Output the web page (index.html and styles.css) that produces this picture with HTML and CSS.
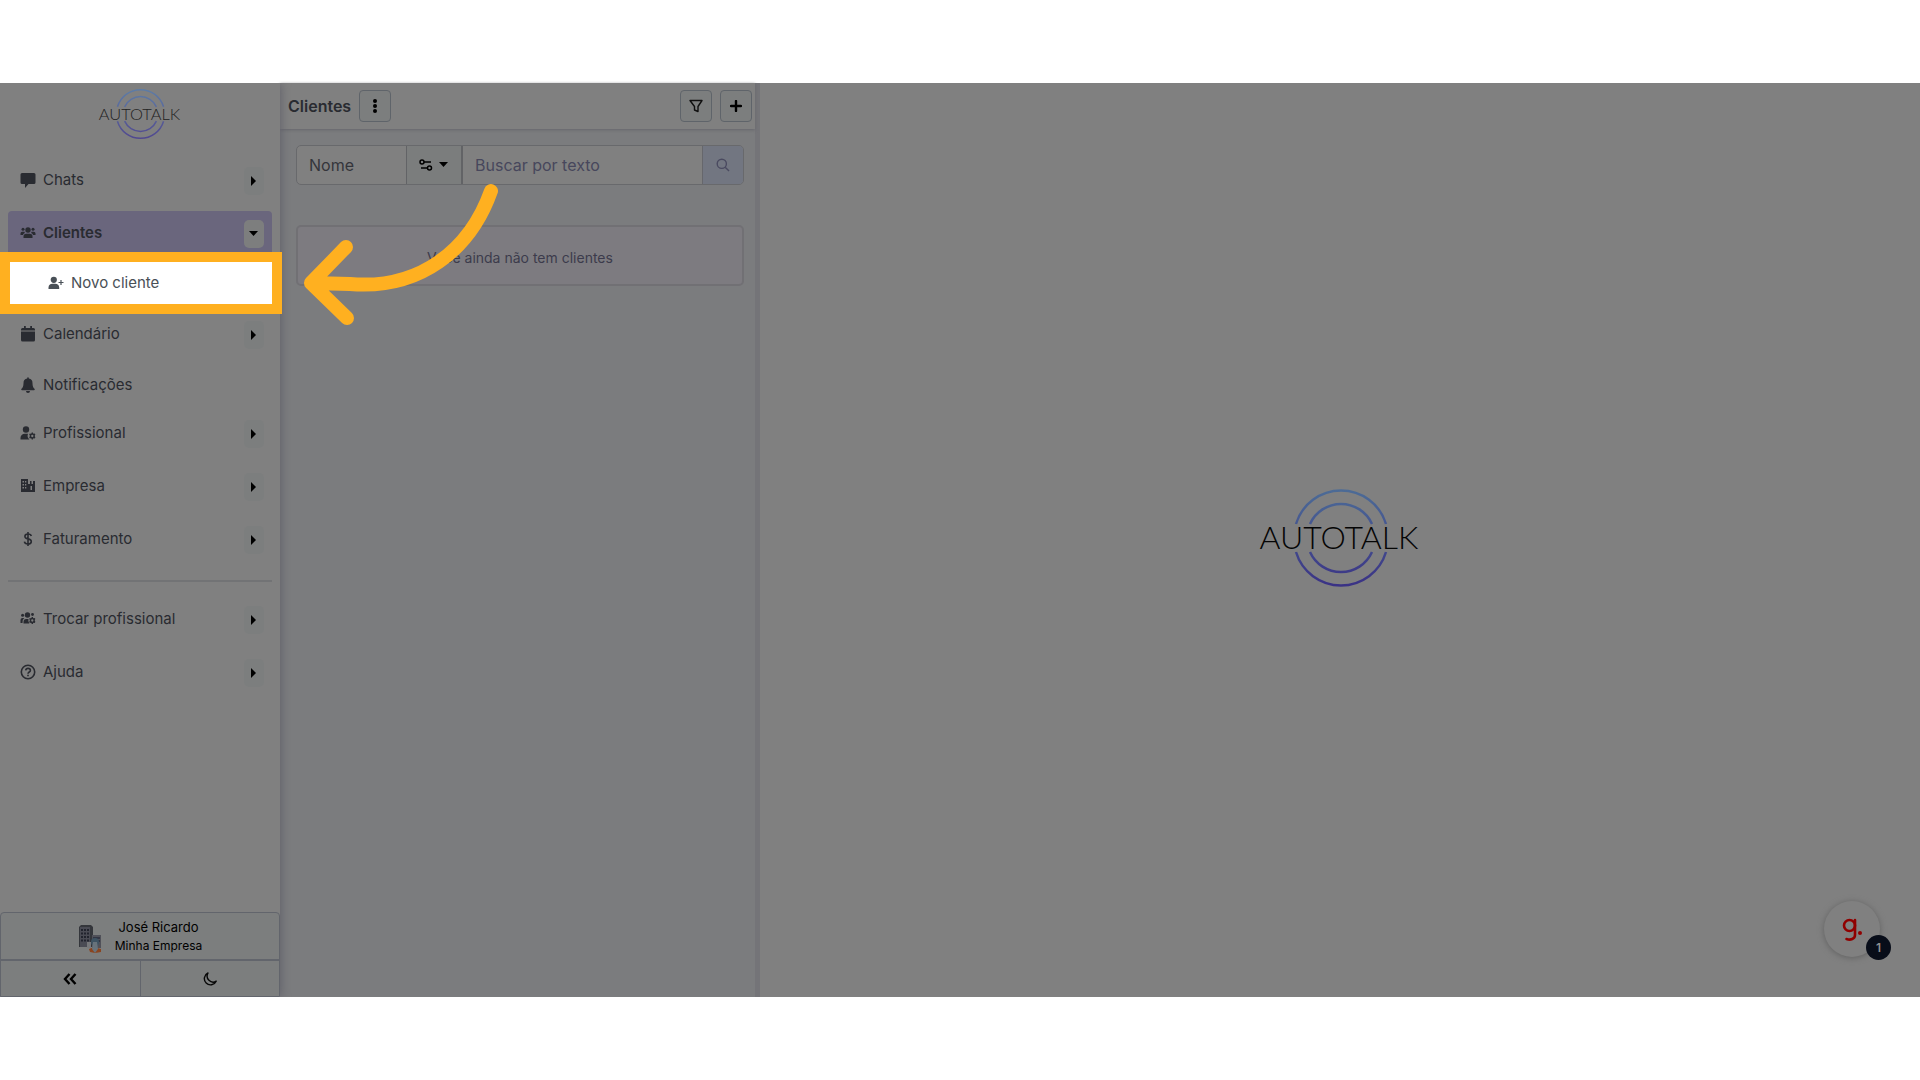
FILE: index.html
```html
<!DOCTYPE html>
<html lang="pt-BR">
<head>
<meta charset="utf-8">
<meta name="viewport" content="width=device-width, initial-scale=1">
<title>Autotalk - Clientes</title>
<link rel="stylesheet" href="styles.css">
</head>
<body>
<svg class="defs" aria-hidden="true">
  <defs>
    <linearGradient id="ring" gradientUnits="userSpaceOnUse" x1="0" y1="2" x2="0" y2="98">
      <stop offset="0" stop-color="#4c6b96"/><stop offset=".4" stop-color="#455590"/><stop offset="1" stop-color="#3a3285"/>
    </linearGradient>
    <linearGradient id="ring-soft" gradientUnits="userSpaceOnUse" x1="0" y1="2" x2="0" y2="98">
      <stop offset="0" stop-color="#5d7ca6"/><stop offset=".4" stop-color="#5a699c"/><stop offset="1" stop-color="#50478f"/>
    </linearGradient>
  </defs>
  <symbol id="caret-right" viewBox="0 0 6 10"><path d="M0 0l5 5-5 5z"/></symbol>
  <symbol id="caret-down" viewBox="0 0 10 6"><path d="M0 0h9L4.500 5z"/></symbol>
  <symbol id="gear" viewBox="0 0 8 8"><path fill-rule="evenodd" d="M3.300 0h1.400l.3 1 .8.4 1-.3.8 1.300-.7.8v1.500l.7.8-.8 1.300-1-.3-.8.4-.3 1H3.300l-.3-1-.8-.4-1 .3-.8-1.300.7-.8V3.200l-.7-.8.8-1.300 1 .3.8-.4zM4 2.700a1.300 1.300 0 100 2.600 1.300 1.300 0 000-2.600z"/></symbol>
</svg>

<div class="app">
  <nav class="sidebar" aria-label="Menu principal">
    <a class="brand" href="#">
      <svg class="logo logo-small" viewBox="0 0 164 100" role="img" aria-label="Autotalk">
        <g fill="none" stroke="url(#ring-soft)" stroke-width="3">
          <path d="M38 36a47 47 0 0 1 90 0M52 36a34 34 0 0 1 62 0M38 64a47 47 0 0 0 90 0M52 64a34 34 0 0 0 62 0"/>
        </g>
        <text class="logo-text" x="81" y="61" text-anchor="middle">AUTOTALK</text>
      </svg>
    </a>
    <ul class="menu">
      <li class="row">
        <a href="#"><svg class="icon" viewBox="0 0 16 16"><path d="M2 1h12A1.500 1.500 0 0 1 15.500 2.500v8a1.500 1.500 0 0 1-1.500 1.500H8.500L5 16v-4H2A1.500 1.500 0 0 1 .5 10.500v-8A1.500 1.500 0 0 1 2 1z"/></svg>Chats</a>
        <button class="toggle" aria-label="Abrir Chats"><svg class="car-r"><use href="#caret-right"/></svg></button>
      </li>
      <li class="row active">
        <a href="#"><svg class="icon" viewBox="0 0 16 16"><circle cx="8" cy="5" r="2.700"/><path d="M3.500 13v-1.500A2.800 2.800 0 0 1 6.300 8.700h3.400a2.800 2.800 0 0 1 2.800 2.800V13z"/><circle cx="3" cy="4.300" r="1.500"/><circle cx="13" cy="4.300" r="1.500"/><path d="M.5 10V8.500A1.700 1.700 0 0 1 2.200 6.800H4.500L4.800 8A3.800 3.800 0 0 0 2.900 10zM15.500 10V8.500a1.700 1.700 0 0 0-1.700-1.700H11.500L11.200 8a3.800 3.800 0 0 1 1.900 2z"/></svg>Clientes</a>
        <button class="toggle" aria-label="Fechar Clientes" aria-expanded="true"><svg class="car-d"><use href="#caret-down"/></svg></button>
      </li>
      <li class="submenu">
        <a class="highlight" href="#"><svg class="icon" viewBox="0 0 16 16"><circle cx="5.800" cy="4.800" r="3.100"/><path d="M.5 14v-1.500A4 4 0 0 1 4.500 8.800h2.700a4 4 0 0 1 4 3.700V14z"/><path d="M13 5v5M10.500 7.500h5" stroke="currentColor" stroke-width="1.200"/></svg>Novo cliente</a>
      </li>
      <li class="row">
        <a href="#"><svg class="icon" viewBox="0 0 16 16"><path d="M4 0h1.800v2h4.400V0H12v2h1.500A1.500 1.500 0 0 1 15 3.500v1H1v-1A1.500 1.500 0 0 1 2.500 2H4zM1 5.600h14v8.400a1.500 1.500 0 0 1-1.500 1.500h-11A1.500 1.500 0 0 1 1 14z"/></svg>Calendário</a>
        <button class="toggle" aria-label="Abrir Calendário"><svg class="car-r"><use href="#caret-right"/></svg></button>
      </li>
      <li class="row plain">
        <a href="#"><svg class="icon" viewBox="0 0 16 16"><path d="M7.200 1a.8.8 0 0 1 1.600 0v.6A4.600 4.600 0 0 1 12.500 6.200c0 3 .8 4.400 2 5.600.6.700.2 1.400-.5 1.400H2c-.7 0-1.100-.7-.5-1.400 1.200-1.200 2-2.600 2-5.600A4.600 4.600 0 0 1 7.200 1.600zM6 14h4a2 2 0 0 1-4 0z"/></svg>Notificações</a>
      </li>
      <li class="row">
        <a href="#"><svg class="icon" viewBox="0 0 16 16"><circle cx="6" cy="4.500" r="3.200"/><path d="M.5 14.500V13A4.200 4.200 0 0 1 4.700 8.800H8A5 5 0 0 0 9.500 14.500z"/><use href="#gear" x="8.800" y="7" width="7" height="8"/></svg>Profissional</a>
        <button class="toggle" aria-label="Abrir Profissional"><svg class="car-r"><use href="#caret-right"/></svg></button>
      </li>
      <li class="row">
        <a href="#"><svg class="icon" viewBox="0 0 16 16"><path fill-rule="evenodd" d="M1 1h7v5h2V3h1.500v3H13V3h2v11H1zM2.500 3v1.500H4V3zm2.500 0v1.500h1.300V3zM2.500 6v1.500H4V6zM5 6v1.500h1.300V6zM2.500 9v1.500H4V9zM5 9v1.500h1.300V9zm5.500-1v4H12V8z"/></svg>Empresa</a>
        <button class="toggle" aria-label="Abrir Empresa"><svg class="car-r"><use href="#caret-right"/></svg></button>
      </li>
      <li class="row">
        <a href="#"><svg class="icon line" viewBox="0 0 16 16"><path d="M8 1v14M11.300 5C11 3.600 9.800 3 8 3 6.200 3 4.900 3.900 4.900 5.400c0 3.300 6.400 1.600 6.400 5C11.300 12 10 13 8 13s-3.400-.8-3.600-2.300"/></svg>Faturamento</a>
        <button class="toggle" aria-label="Abrir Faturamento"><svg class="car-r"><use href="#caret-right"/></svg></button>
      </li>
    </ul>
    <hr class="divider">
    <ul class="menu">
      <li class="row">
        <a href="#"><svg class="icon" viewBox="0 0 16 16"><circle cx="7.500" cy="4" r="2.700"/><circle cx="2.600" cy="4.200" r="1.500"/><circle cx="12.500" cy="3.500" r="1.400"/><path d="M3.500 12.500V11A3 3 0 0 1 6.300 8H8.500a5 5 0 0 0 .8 4.500zM.5 12V9A2 2 0 0 1 2.500 7H4.300A5 5 0 0 0 2.500 12z"/><use href="#gear" x="8.800" y="5.500" width="7" height="8"/></svg>Trocar profissional</a>
        <button class="toggle" aria-label="Abrir Trocar profissional"><svg class="car-r"><use href="#caret-right"/></svg></button>
      </li>
      <li class="row">
        <a href="#"><svg class="icon line" viewBox="0 0 16 16"><circle cx="8" cy="8" r="6.700"/><path d="M5.700 6.300C5.900 4.900 7 4.400 8 4.400c1.300 0 2.400.7 2.400 2C10.400 8 8 8 8 9.700M8 10.800v1.400"/></svg>Ajuda</a>
        <button class="toggle" aria-label="Abrir Ajuda"><svg class="car-r"><use href="#caret-right"/></svg></button>
      </li>
    </ul>
    <div class="account">
      <button class="profile">
        <svg class="company" viewBox="0 0 24 30">
          <path d="M1 3l2-2h10l2 2v20H1z" fill="#34363b"/><path d="M2 3h10v20H2z" fill="#4a4b54"/>
          <path d="M3 6h9M3 9.500h9M3 13h9M3 16.500h9" stroke="#22242e" stroke-width="2" stroke-dasharray="2 1"/>
          <path d="M14 11h9v13h-9z" fill="#505159"/><path d="M15 14h7M15 17h7" stroke="#292c3c" stroke-width="1.500"/>
          <path d="M9 18h4v6H9z" fill="#77787b"/><path d="M11 25l5-2 7 2v3l-6 1-5-1z" fill="#8a4520"/>
          <circle cx="17" cy="18" r="4" fill="#3e5362"/><path d="M15 18h4l1 7-3 4-3-4z" fill="#68737b"/>
        </svg>
        <span class="who"><span class="name">José Ricardo</span><span class="org">Minha Empresa</span></span>
      </button>
      <div class="tools">
        <button aria-label="Recolher menu"><svg width="14" height="12" viewBox="0 0 14 12" fill="none" stroke="#000" stroke-width="2.400"><path d="M6.500 1L2 6l4.500 5M12.500 1L8 6l4.500 5"/></svg></button>
        <button aria-label="Modo escuro"><svg width="14" height="14" viewBox="0 0 14 14" fill="none" stroke="#080808" stroke-width="1.400" stroke-linejoin="round"><path d="M5 1A6.200 6.200 0 1 0 13.200 9.200 6 6 0 0 1 5 1z"/></svg></button>
      </div>
    </div>
  </nav>

  <section class="clients">
    <header class="bar">
      <h1>Clientes</h1>
      <button class="square" aria-label="Mais opções"><svg width="4" height="14" viewBox="0 0 4 14"><circle cx="2" cy="2" r="2"/><circle cx="2" cy="7" r="2"/><circle cx="2" cy="12" r="2"/></svg></button>
      <span class="grow"></span>
      <button class="square" aria-label="Filtrar"><svg width="14" height="14" viewBox="0 0 14 14" fill="none" stroke="#101010" stroke-width="1.400" stroke-linejoin="round"><path d="M1 1.500h12L9 7.500v5L5.500 11V7.500z"/></svg></button>
      <button class="square" aria-label="Novo cliente"><svg width="12" height="12" viewBox="0 0 12 12" stroke="#000" stroke-width="2.400" stroke-linecap="round"><path d="M6 1v10M1 6h10"/></svg></button>
    </header>
    <div class="content">
      <form class="search">
        <input class="field" type="text" value="Nome" readonly aria-label="Campo da busca">
        <button class="order" type="button" aria-label="Opções de busca">
          <svg width="14" height="12" viewBox="0 0 14 12" fill="none" stroke="#000" stroke-width="1.500"><circle cx="3" cy="3" r="2"/><path d="M5 3h7M2 9h6"/><circle cx="10.500" cy="9" r="2"/></svg>
          <svg class="car-d"><use href="#caret-down"/></svg>
        </button>
        <input class="query" type="text" placeholder="Buscar por texto" aria-label="Buscar por texto">
        <button class="go" type="submit" aria-label="Buscar"><svg width="14" height="14" viewBox="0 0 14 14" fill="none" stroke="#4a4a60" stroke-width="1.400"><circle cx="5.800" cy="5.800" r="4.600"/><path d="M9.200 9.200L13 13"/></svg></button>
      </form>
      <p class="empty">Você ainda não tem clientes</p>
    </div>
    <svg class="arrow" viewBox="0 0 200 148" aria-hidden="true"><path d="M189 13C168 72 118 112 48 106L9 105M44 69L9 105L45 140"/></svg>
  </section>

  <main class="stage">
    <svg class="logo logo-large" viewBox="0 0 164 100" role="img" aria-label="Autotalk">
      <g fill="none" stroke="url(#ring)" stroke-width="2.500">
        <path d="M38 36a47 47 0 0 1 90 0M52 36a34 34 0 0 1 62 0M38 64a47 47 0 0 0 90 0M52 64a34 34 0 0 0 62 0"/>
      </g>
      <text class="logo-text" x="81" y="61" text-anchor="middle">AUTOTALK</text>
    </svg>
    <button class="guide" aria-label="Guias">
      <svg width="22" height="26" viewBox="0 0 22 26" fill="none" stroke="#900000" stroke-width="2.600" stroke-linecap="round"><circle cx="8.500" cy="9.500" r="5.500"/><path d="M14 4v15c0 4-4.500 5.500-8.500 4"/><circle cx="19" cy="17" r="2" fill="#900000" stroke="none"/></svg>
      <span class="badge">1</span>
    </button>
  </main>
</div>
</body>
</html>
```
FILE: styles.css
```css
* { box-sizing: border-box; }

body {
  margin: 0;
  min-height: 100vh;
  padding: 83px 0;
  display: flex;
  background: #fff;
  color: #292b31;
  font-family: Inter, "Liberation Sans", sans-serif;
  font-size: 15px;
  line-height: 20px;
}

.defs { position: absolute; width: 0; height: 0; }

button {
  margin: 0;
  padding: 0;
  display: flex;
  align-items: center;
  justify-content: center;
  border: 0;
  background: none;
  color: #000;
  font: inherit;
}

input { font: inherit; }
a { color: inherit; text-decoration: none; }

.app { flex: 1; display: flex; min-width: 0; background: #808080; }

/* Sidebar */
.sidebar {
  flex: 0 0 280px;
  display: flex;
  flex-direction: column;
  background: #808080;
  box-shadow: 0 0 10px #5c5c66;
  clip-path: inset(0 -12px 0 0);
  z-index: 2;
}

.brand { display: flex; justify-content: center; padding: 5px 0 18px; }
.logo-small { width: 84px; height: 52px; }
.logo-large { width: 164px; height: 100px; }
.logo-text { font-family: Lato, sans-serif; font-weight: 300; font-size: 32px; fill: #050505; }
.logo-small .logo-text { fill: #222; }

.menu { margin: 0; padding: 0 8px; list-style: none; display: flex; flex-direction: column; gap: 8px; }
.row { display: flex; align-items: center; height: 45px; padding: 0 8px 0 12px; border-radius: 4px; }
.row a { flex: 1; display: flex; align-items: center; gap: 7px; padding-bottom: 2px; }
.row.plain { height: 38px; padding-top: 4px; }
.row.active { background: #6a667d; font-weight: 600; }
.icon { width: 16px; height: 16px; fill: currentColor; flex: none; }
.icon.line { fill: none; stroke: currentColor; stroke-width: 1.600; }

.toggle { width: 20px; height: 28px; border-radius: 5px; background: #7c7e7e; }
.active .toggle { background: #7d7e7e; }
.car-r { width: 6px; height: 10px; }
.car-d { width: 10px; height: 6px; }

.submenu { padding-left: 2px; margin-top: -2px; }
.highlight {
  display: flex;
  align-items: center;
  gap: 7px;
  height: 42px;
  padding-left: 38px;
  background: #fff;
  outline: 10px solid #ffb020;
  color: #495057;
}

.divider { width: auto; height: 2px; margin: 18px 8px 15px; border: 0; background: #727375; }

.account { margin-top: auto; border: 1px solid #62656c; border-radius: 4px 4px 0 0; background: #7c7e7e; }
.profile { width: 100%; height: 48px; gap: 13px; border-bottom: 2px solid #62656c; }
.company { width: 24px; height: 30px; margin-top: 6px; }
.who { display: flex; flex-direction: column; align-items: center; }
.name { font-size: 13px; }
.org { font-size: 12px; line-height: 18px; }
.tools { display: flex; }
.tools button { flex: 1; height: 35px; }
.tools button + button { border-left: 1px solid #62656c; }

/* Client list */
.clients {
  position: relative;
  flex: 0 0 480px;
  min-width: 0;
  display: flex;
  flex-direction: column;
  border-right: 5px solid #747478;
  background: #7b7c7e;
}

.bar {
  display: flex;
  align-items: center;
  gap: 8px;
  height: 46px;
  padding: 0 3px 0 8px;
  background: #808080;
  box-shadow: 0 1px 3px #66666c;
}
.bar h1 { margin: 0; font-size: 16px; font-weight: 600; }
.grow { flex: 1; }
.square { width: 32px; height: 32px; border: 1px solid #5f646a; border-radius: 4px; background: #7c7e7e; }

.content { padding: 16px 11px 0 16px; display: flex; flex-direction: column; gap: 40px; }
.search { display: flex; height: 40px; border: 1px solid #68696c; border-radius: 5px; background: #808080; overflow: hidden; }
.search input { min-width: 0; border: 0; padding: 0 12px; background: none; color: #34353b; font-size: 16px; }
.search .field { width: 109px; }
.search .query { flex: 1; }
.search .query::placeholder { color: #47475c; opacity: 1; }
.order { width: 57px; gap: 6px; border: solid #626366; border-width: 0 2px 0 1px; background: #7b7d7d; }
.go { width: 41px; border-left: 1px solid #66676c; background: #727681; }
.empty {
  margin: 0;
  height: 61px;
  display: flex;
  align-items: center;
  justify-content: center;
  padding-top: 4px;
  border: 2px solid #717074;
  border-radius: 5px;
  background: #7d7b80;
  color: #3c3b4c;
  font-size: 14px;
}

.arrow { position: absolute; left: 22px; top: 95px; width: 200px; height: 148px; z-index: 3; }
.arrow path { fill: none; stroke: #ffb020; stroke-width: 14; stroke-linecap: round; stroke-linejoin: round; }

/* Stage */
.stage { position: relative; flex: 1; min-width: 0; display: flex; align-items: center; justify-content: center; padding-bottom: 4px; }
.guide {
  position: absolute;
  right: 40px;
  bottom: 40px;
  width: 56px;
  height: 56px;
  border-radius: 50%;
  background: #808080;
  box-shadow: 0 1px 6px #606060;
}
.badge {
  position: absolute;
  right: -11px;
  bottom: -3px;
  width: 25px;
  height: 25px;
  border-radius: 50%;
  background: #080d19;
  color: #909090;
  font-size: 12px;
  font-weight: 600;
  line-height: 25px;
}
```
